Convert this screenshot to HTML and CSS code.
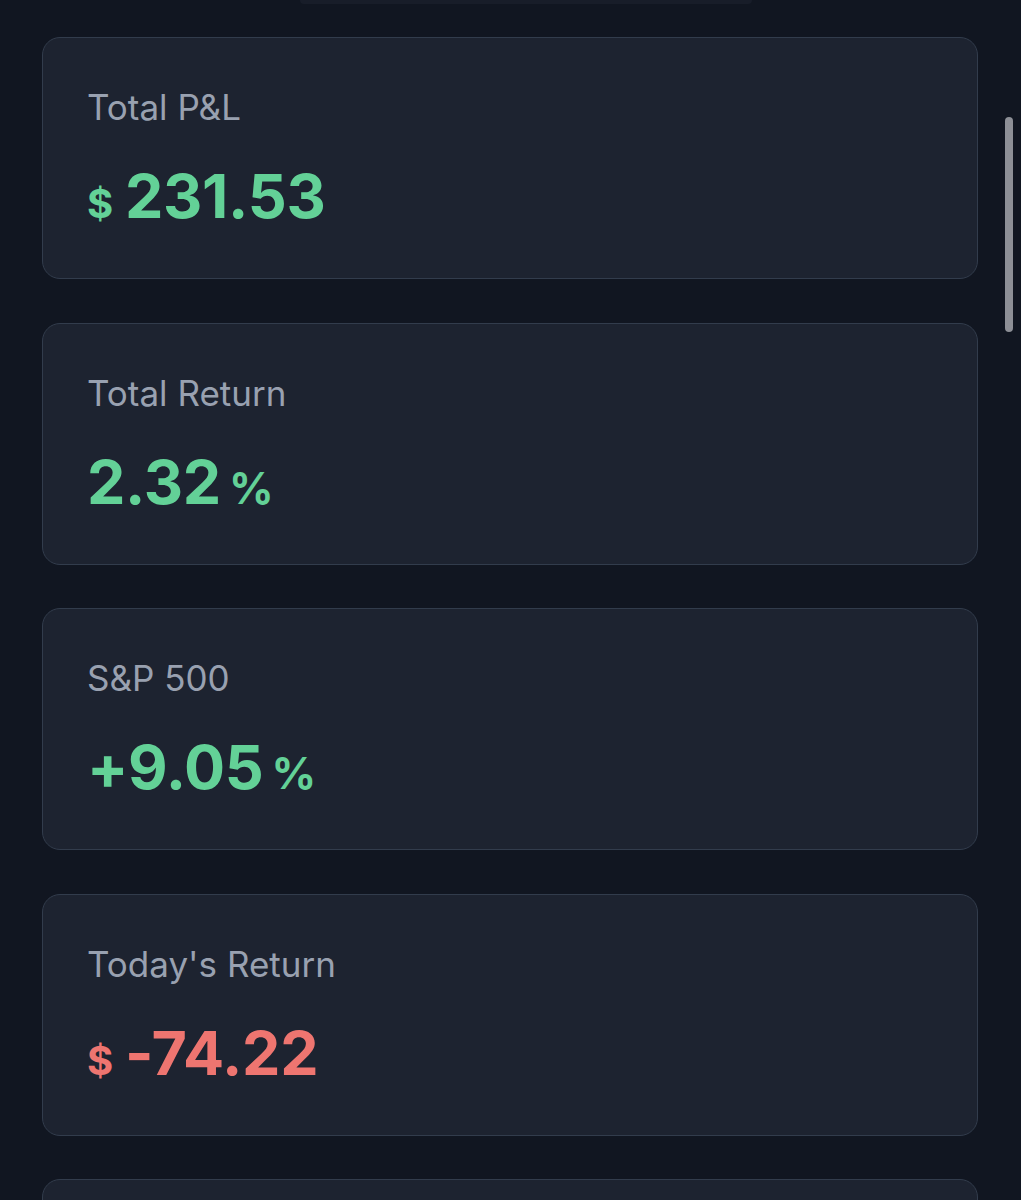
FILE: index.html
```html
<!DOCTYPE html>
<html lang="en">
<head>
    <meta charset="UTF-8">
    <meta name="viewport" content="width=device-width, initial-scale=1.0">
    <title>Portfolio</title>
    <link rel="stylesheet" href="styles.css">
</head>
<body>
    <!-- fim do bloco anterior (rolado para cima) -->
    <div class="top-edge"></div>

    <div class="stats">
        <div class="stat-card">
            <div class="stat-label">Total P&amp;L</div>
            <div class="stat-value up"><span class="unit">$</span>231.53</div>
        </div>

        <div class="stat-card">
            <div class="stat-label">Total Return</div>
            <div class="stat-value up">2.32<span class="unit after">%</span></div>
        </div>

        <div class="stat-card">
            <div class="stat-label">S&amp;P 500</div>
            <div class="stat-value up">+9.05<span class="unit after">%</span></div>
        </div>

        <div class="stat-card">
            <div class="stat-label">Today's Return</div>
            <div class="stat-value down"><span class="unit">$</span>-74.22</div>
        </div>

        <!-- próximo card, fora da tela -->
        <div class="stat-card"></div>
    </div>

    <div class="scrollbar"></div>
</body>
</html>
```

FILE: styles.css
```css
body {
    margin: 0;
    padding: 0;
    background-color: #111621;
    font-family: Inter, "Liberation Sans", Arial, sans-serif;
    overflow: hidden;
}
.top-edge {
    width: 452px;
    height: 4px;
    margin: 0 0 0 300px;
    background-color: #181d29;
    border-radius: 0 0 14px 14px;
}
.stats {
    display: flex;
    flex-direction: column;
    gap: 43.6px;
    padding: 33px 43px 0 42px;
}
.stat-card {
    height: 242px;
    box-sizing: border-box;
    padding: 48px 44px 0 44px;
    background-color: #1d2330;
    border: 1.5px solid #323c4c;
    border-radius: 18px;
}
.stat-label {
    font-size: 35px;
    line-height: 42px;
    color: #99a1b0;
}
.stat-value {
    margin-top: 37px;
    font-size: 61px;
    line-height: 63px;
    font-weight: 700;
    letter-spacing: -0.3px;
}
.stat-value.up {
    color: #63d197;
}
.stat-value.down {
    color: #ee7570;
}
.unit {
    font-size: 40px;
    margin-right: 12px;
}
.unit.after {
    font-size: 44px;
    margin-right: 0;
    margin-left: 8px;
}
/* barra de rolagem do iOS, por cima do conteúdo */
.scrollbar {
    position: fixed;
    top: 117px;
    left: 1005px;
    width: 8px;
    height: 215px;
    border-radius: 4px;
    background-color: #8d8f96;
}
```
